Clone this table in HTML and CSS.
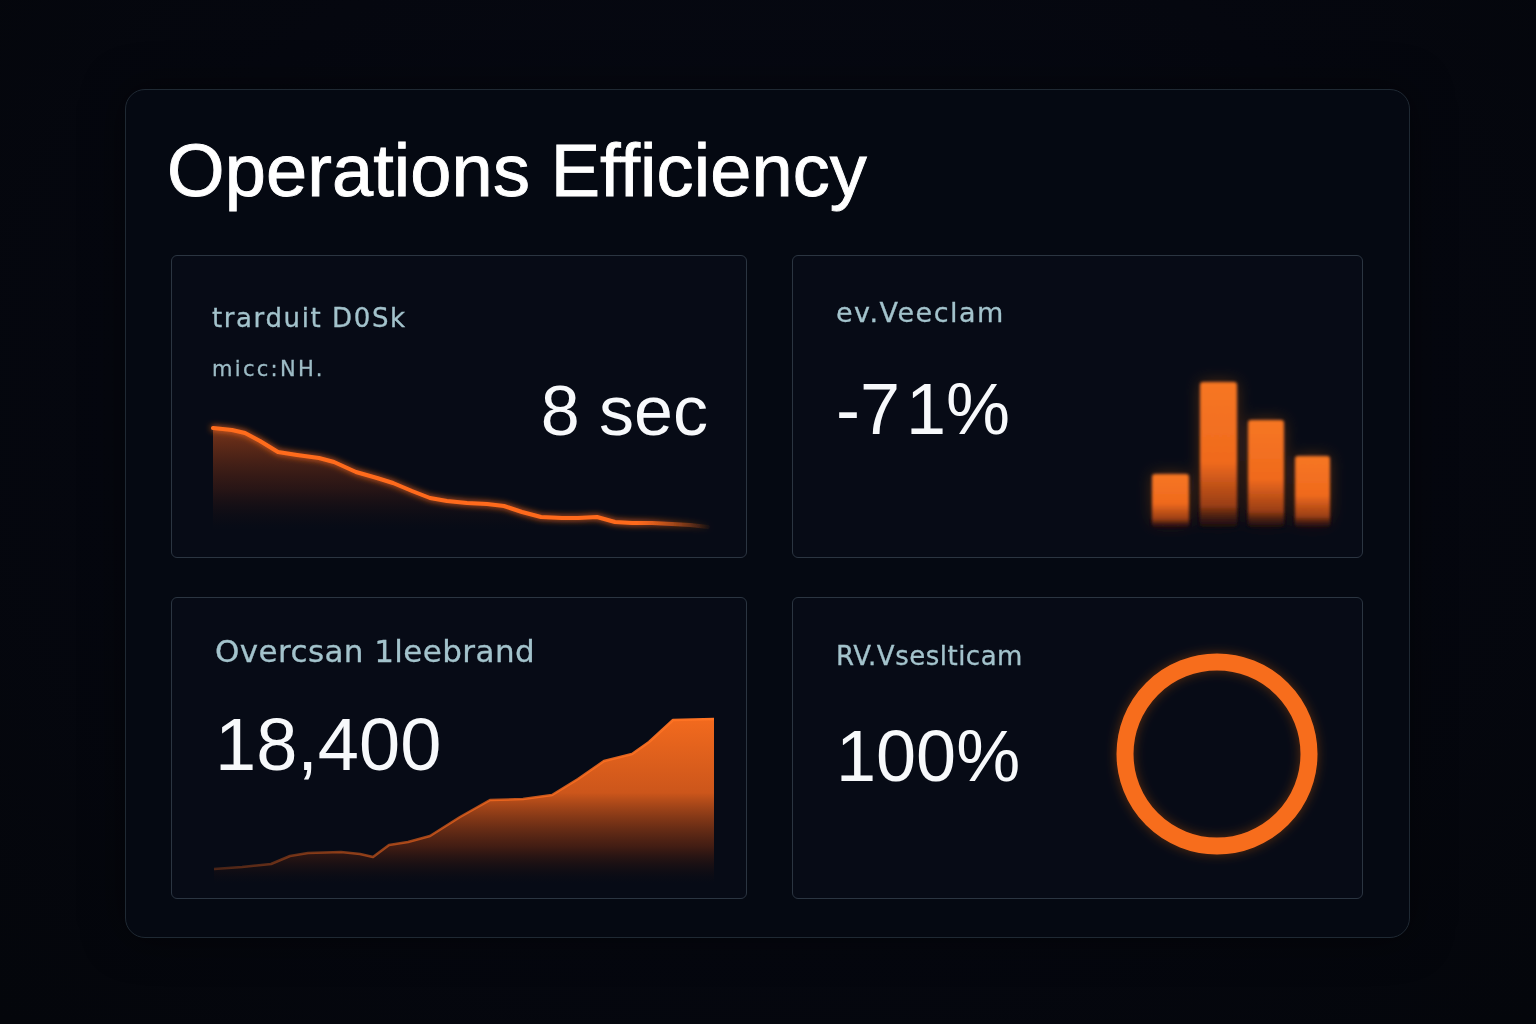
FILE: index.html
```html
<!DOCTYPE html>
<html lang="en">
<head>
<meta charset="utf-8">
<title>Operations Efficiency</title>
<link rel="stylesheet" href="styles.css">
</head>
<body>
<main class="panel">
  <h1 class="title">Operations Efficiency</h1>
  <section class="grid">
    <article class="card card-a">
      <svg class="chart" viewBox="0 0 574 301" aria-hidden="true">
        <defs>
          <linearGradient id="fillA" x1="0" y1="172" x2="0" y2="274" gradientUnits="userSpaceOnUse">
            <stop offset="0" stop-color="#d5561c" stop-opacity="0.55"/>
            <stop offset="0.6" stop-color="#8a3314" stop-opacity="0.25"/>
            <stop offset="1" stop-color="#2a120c" stop-opacity="0"/>
          </linearGradient>
          <linearGradient id="strokeA" x1="41" y1="0" x2="540" y2="0" gradientUnits="userSpaceOnUse">
            <stop offset="0" stop-color="#ff6c1e"/>
            <stop offset="0.85" stop-color="#ff6a1c"/>
            <stop offset="1" stop-color="#ff6a1c" stop-opacity="0"/>
          </linearGradient>
          <filter id="glowA" x="-10%" y="-50%" width="120%" height="200%">
            <feGaussianBlur stdDeviation="3" result="b"/>
            <feMerge><feMergeNode in="b"/><feMergeNode in="SourceGraphic"/></feMerge>
          </filter>
        </defs>
        <path fill="url(#fillA)" d="M41,172 L60,174 L73,177 L88,185 L106,196 L125,199 L147,202 L162,206 L184,216 L205,222 L221,227 L240,235 L258,242 L275,245 L295,247 L315,248 L332,250 L350,256 L369,261 L390,262 L406,262 L425,261 L443,266 L460,267 L480,267 L500,268 L518,269 L536,271 L536,274 L41,274 Z"/>
        <path fill="none" stroke="url(#strokeA)" stroke-width="4" stroke-linejoin="round" stroke-linecap="round" filter="url(#glowA)" d="M41,172 L60,174 L73,177 L88,185 L106,196 L125,199 L147,202 L162,206 L184,216 L205,222 L221,227 L240,235 L258,242 L275,245 L295,247 L315,248 L332,250 L350,256 L369,261 L390,262 L406,262 L425,261 L443,266 L460,267 L480,267 L500,268 L518,269 L536,271"/>
      </svg>
      <div class="content">
        <div class="label">trarduit D0Sk</div>
        <div class="sublabel">micc:NH.</div>
        <div class="value value-right">8 sec</div>
      </div>
    </article>

    <article class="card card-b">
      <svg class="chart" viewBox="0 0 569 301" aria-hidden="true">
        <defs>
          <linearGradient id="barFill" x1="0" y1="0" x2="0" y2="1">
            <stop offset="0" stop-color="#f67622"/>
            <stop offset="0.55" stop-color="#f06a1e"/>
            <stop offset="0.85" stop-color="#9a3e14"/>
            <stop offset="1" stop-color="#2a120c" stop-opacity="0.4"/>
          </linearGradient>
          <filter id="glowB" x="-50%" y="-20%" width="200%" height="140%">
            <feGaussianBlur stdDeviation="1.4" result="s"/>
            <feGaussianBlur in="SourceGraphic" stdDeviation="8" result="g"/>
            <feComponentTransfer in="g" result="g2"><feFuncA type="linear" slope="0.3"/></feComponentTransfer>
            <feMerge><feMergeNode in="g2"/><feMergeNode in="s"/></feMerge>
          </filter>
        </defs>
        <g filter="url(#glowB)" fill="url(#barFill)">
          <rect x="359" y="218" width="37" height="53" rx="3"/>
          <rect x="407" y="126" width="37" height="145" rx="3"/>
          <rect x="455" y="164" width="36" height="107" rx="3"/>
          <rect x="502" y="200" width="35" height="71" rx="3"/>
        </g>
      </svg>
      <div class="content">
        <div class="label label-b">ev.Veeclam</div>
        <div class="value value-spaced">-7<span class="gap">1</span>%</div>
      </div>
    </article>

    <article class="card card-c">
      <svg class="chart" viewBox="0 0 574 300" aria-hidden="true">
        <defs>
          <linearGradient id="fillC" x1="0" y1="121" x2="0" y2="285" gradientUnits="userSpaceOnUse">
            <stop offset="0" stop-color="#f26a1e"/>
            <stop offset="0.45" stop-color="#cc561b"/>
            <stop offset="0.78" stop-color="#5a2412" stop-opacity="0.7"/>
            <stop offset="1" stop-color="#1a0d0d" stop-opacity="0"/>
          </linearGradient>
          <linearGradient id="strokeC" x1="42" y1="0" x2="542" y2="0" gradientUnits="userSpaceOnUse">
            <stop offset="0" stop-color="#ff6a1c" stop-opacity="0.25"/>
            <stop offset="0.4" stop-color="#ff6a1c" stop-opacity="0.6"/>
            <stop offset="1" stop-color="#ff7424"/>
          </linearGradient>
        </defs>
        <path fill="url(#fillC)" d="M42,271 L70,269 L99,266 L118,258 L136,255 L169,254 L188,256 L201,259 L217,247 L236,244 L258,238 L288,219 L318,202 L351,201 L380,197 L406,181 L432,163 L460,156 L477,144 L501,122 L542,121 L542,286 L42,286 Z"/>
        <path fill="none" stroke="url(#strokeC)" stroke-width="2.5" stroke-linejoin="round" d="M42,271 L70,269 L99,266 L118,258 L136,255 L169,254 L188,256 L201,259 L217,247 L236,244 L258,238 L288,219 L318,202 L351,201 L380,197 L406,181 L432,163 L460,156 L477,144 L501,122 L542,121"/>
      </svg>
      <div class="content">
        <div class="label label-lg">Overcsan 1leebrand</div>
        <div class="value value-xl">18,400</div>
      </div>
    </article>

    <article class="card card-d">
      <svg class="chart" viewBox="0 0 569 300" aria-hidden="true">
        <defs>
          <filter id="glowD" x="-30%" y="-30%" width="160%" height="160%">
            <feGaussianBlur in="SourceGraphic" stdDeviation="6" result="g"/>
            <feComponentTransfer in="g" result="g2"><feFuncA type="linear" slope="0.35"/></feComponentTransfer>
            <feMerge><feMergeNode in="g2"/><feMergeNode in="SourceGraphic"/></feMerge>
          </filter>
        </defs>
        <circle cx="424" cy="156" r="92" fill="none" stroke="#f76d1e" stroke-width="17" filter="url(#glowD)"/>
      </svg>
      <div class="content">
        <div class="label label-d">RV.Vseslticam</div>
        <div class="value">100%</div>
      </div>
    </article>
  </section>
</main>
</body>
</html>
```

FILE: styles.css
```css
* {
  box-sizing: border-box;
}

html, body {
  margin: 0;
  height: 1024px;
}

body {
  background: radial-gradient(ellipse at 50% 40%, #070a14 0%, #05070f 60%, #04060b 100%);
  padding: 89px 0 0 125px;
  overflow: hidden;
  font-family: "Liberation Sans", Arial, sans-serif;
}

.panel {
  width: 1285px;
  height: 849px;
  border: 1px solid #1f2933;
  border-radius: 20px;
  background: #050912;
  padding: 44px 46px 38px 45px;
  box-shadow: 0 0 40px rgba(0, 0, 0, 0.5);
}

.title {
  margin: 0 0 47px -4px;
  font: 400 74px/74px "Liberation Sans", Arial, sans-serif;
  color: #ffffff;
  -webkit-text-stroke: 0.9px #ffffff;
  letter-spacing: 0.1px;
}

.grid {
  display: grid;
  grid-template-columns: 576px 571px;
  grid-template-rows: 303px 302px;
  column-gap: 45px;
  row-gap: 39px;
}

.card {
  display: grid;
  grid-template-columns: 1fr;
  grid-template-rows: 1fr;
  border: 1px solid #2b3541;
  border-radius: 6px;
  background: #070b16;
  overflow: hidden;
}

.card > * {
  grid-area: 1 / 1;
}

.chart {
  display: block;
  width: 100%;
  height: 100%;
}

.content {
  display: flex;
  flex-direction: column;
  align-items: flex-start;
  position: relative;
}

.label {
  font: 400 26px/26px "DejaVu Sans", sans-serif;
  color: #a3c3cc;
  white-space: nowrap;
  letter-spacing: 1.6px;
  -webkit-text-stroke: 0.3px #a3c3cc;
  filter: blur(0.4px);
}

.sublabel {
  font: 400 21px/21px "DejaVu Sans", sans-serif;
  color: #9dbcc6;
  letter-spacing: 2.3px;
  margin-top: 28px;
  white-space: nowrap;
  -webkit-text-stroke: 0.3px #9dbcc6;
  filter: blur(0.4px);
}

.label-b {
  font-size: 27px;
  line-height: 27px;
  letter-spacing: 1.5px;
}

.label-lg {
  font-size: 31px;
  line-height: 31px;
  letter-spacing: 0.4px;
}

.label-d {
  letter-spacing: 0.5px;
}

.value {
  font: 400 72px/72px "Liberation Sans", Arial, sans-serif;
  color: #f7f9fb;
  white-space: nowrap;
}

.value-right {
  align-self: flex-end;
  font-size: 70px;
  line-height: 70px;
  margin-top: -4px;
}

.value-spaced .gap {
  margin-left: 6px;
}

.value-xl {
  font-size: 74px;
  line-height: 74px;
}

.card-a .content {
  padding: 49px 38px 0 40px;
}

.card-b .content {
  padding: 43px 0 0 43px;
}

.card-b .value {
  margin-top: 47px;
}

.card-c .content {
  padding: 38px 0 0 43px;
}

.card-c .value {
  margin-top: 41px;
}

.card-d .content {
  padding: 45px 0 0 43px;
}

.card-d .value {
  margin-top: 51px;
}
```
